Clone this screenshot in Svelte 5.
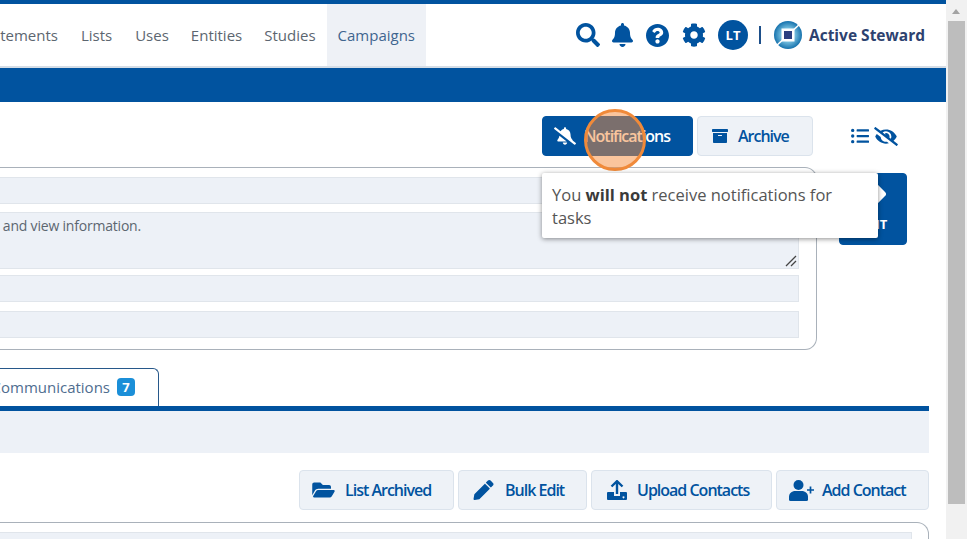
<script>
  const navItems = ['Statements', 'Lists', 'Uses', 'Entities', 'Studies'];
</script>

<div class="page">
  <div class="main">
    <header class="header">
      <nav class="nav">
        {#each navItems as item}
          <span class="nav-item">{item}</span>
        {/each}
        <span class="nav-item active">Campaigns</span>
      </nav>
      <div class="tools">
        <svg class="i-search" viewBox="0 0 512 512"><path d="M505 442.7L405.3 343c-4.5-4.5-10.6-7-17-7H372c27.6-35.3 44-79.7 44-128C416 93.1 322.9 0 208 0S0 93.1 0 208s93.1 208 208 208c48.3 0 92.7-16.4 128-44v16.3c0 6.4 2.5 12.5 7 17l99.7 99.7c9.4 9.4 24.6 9.4 33.9 0l28.3-28.3c9.4-9.4 9.4-24.6.1-34zM208 336c-70.7 0-128-57.2-128-128 0-70.7 57.2-128 128-128 70.7 0 128 57.2 128 128 0 70.7-57.2 128-128 128z"/></svg>
        <svg class="i-bell" viewBox="0 0 448 512"><path d="M224 512c35.32 0 63.97-28.65 63.97-64H160.03c0 35.35 28.65 64 63.97 64zm215.39-149.71c-19.32-20.76-55.47-51.99-55.47-154.29 0-77.7-54.48-139.9-127.94-155.16V32c0-17.67-14.32-32-31.98-32s-31.98 14.33-31.98 32v20.84C118.56 68.1 64.08 130.3 64.08 208c0 102.3-36.15 133.53-55.47 154.29-6 6.45-8.66 14.16-8.61 21.71.11 16.4 12.98 32 32.1 32h383.8c19.12 0 32-15.6 32.1-32 .05-7.55-2.61-15.27-8.61-21.71z"/></svg>
        <svg class="i-help" viewBox="8 8 496 496"><path d="M504 256c0 136.997-111.043 248-248 248S8 392.997 8 256C8 119.083 119.043 8 256 8s248 111.083 248 248zM262.655 90c-54.497 0-89.255 22.957-116.549 63.758-3.536 5.286-2.353 12.415 2.715 16.258l34.699 26.31c5.205 3.947 12.621 3.008 16.665-2.122 17.864-22.658 30.113-35.797 57.303-35.797 20.429 0 45.698 13.148 45.698 32.958 0 14.976-12.363 22.667-32.534 33.976C247.128 238.528 216 254.941 216 296v4c0 6.627 5.373 12 12 12h56c6.627 0 12-5.373 12-12v-1.333c0-28.462 83.186-29.647 83.186-106.667 0-58.002-60.165-102-116.531-102zM256 338c-25.365 0-46 20.635-46 46 0 25.364 20.635 46 46 46s46-20.636 46-46c0-25.365-20.635-46-46-46z"/></svg>
        <svg class="i-cog" viewBox="0 0 512 512"><path d="M487.4 315.7l-42.6-24.6c4.3-23.2 4.3-47 0-70.2l42.6-24.6c4.9-2.8 7.1-8.6 5.5-14-11.1-35.6-30-67.8-54.7-94.6-3.8-4.1-10-5.1-14.8-2.3L380.8 110c-17.9-15.4-38.5-27.3-60.8-35.1V25.8c0-5.6-3.9-10.5-9.4-11.7-36.7-8.2-74.3-7.8-109.2 0-5.5 1.2-9.4 6.1-9.4 11.7V75c-22.2 7.9-42.8 19.8-60.8 35.1L88.7 85.5c-4.9-2.8-11-1.9-14.8 2.3-24.7 26.7-43.6 58.9-54.7 94.6-1.7 5.4.6 11.2 5.5 14L67.3 221c-4.3 23.2-4.3 47 0 70.2l-42.6 24.6c-4.9 2.8-7.1 8.6-5.5 14 11.1 35.6 30 67.8 54.7 94.6 3.8 4.1 10 5.1 14.8 2.3l42.6-24.6c17.9 15.4 38.5 27.3 60.8 35.1v49.2c0 5.6 3.9 10.5 9.4 11.7 36.7 8.2 74.3 7.8 109.2 0 5.5-1.2 9.4-6.1 9.4-11.7v-49.2c22.2-7.9 42.8-19.8 60.8-35.1l42.6 24.6c4.9 2.8 11 1.9 14.8-2.3 24.7-26.7 43.6-58.9 54.7-94.6 1.5-5.5-.7-11.3-5.6-14.1zM256 336c-44.1 0-80-35.9-80-80s35.9-80 80-80 80 35.9 80 80-35.9 80-80 80z"/></svg>
        <span class="avatar">LT</span>
        <span class="divider"></span>
        <svg class="logo" viewBox="0 0 28 28">
          <defs>
            <radialGradient id="logoGrad" cx="50%" cy="50%" r="50%">
              <stop offset="0%" stop-color="#e8f6fb" />
              <stop offset="45%" stop-color="#7cc4e2" />
              <stop offset="100%" stop-color="#1672ad" />
            </radialGradient>
          </defs>
          <circle cx="14" cy="14" r="14" fill="url(#logoGrad)" />
          <path d="M1 26 L27 2" stroke="#fff" stroke-width="1.6" />
          <rect x="7.5" y="7.5" width="13" height="13" fill="#fff" />
          <rect x="10" y="10" width="8" height="8" fill="#2b3f80" />
        </svg>
        <span class="brand">Active Steward</span>
      </div>
    </header>
    <div class="banner"></div>

    <div class="actions">
      <button class="btn primary">
        <svg class="b-icon" viewBox="0 0 640 512"><path d="M633.82 458.1l-90.62-70.05c.19-1.38.8-2.66.8-4.05.05-7.55-2.61-15.27-8.61-21.71-19.32-20.76-55.47-51.99-55.47-154.29 0-77.7-54.48-139.9-127.94-155.16V32c0-17.67-14.32-32-31.98-32s-31.98 14.33-31.98 32v20.84c-40.33 8.38-74.66 31.07-97.59 62.57L45.47 3.37C38.49-2.05 28.43-.8 23.01 6.18L3.37 31.45C-2.05 38.42-.8 48.47 6.18 53.9l588.35 454.73c6.98 5.43 17.03 4.17 22.46-2.81l19.64-25.27c5.42-6.97 4.17-17.02-2.81-22.45zM157.23 251.54c-8.61 67.96-36.41 93.33-52.62 110.75-6 6.45-8.66 14.16-8.61 21.71.11 16.4 12.98 32 32.1 32h241.92L157.23 251.54zM320 512c35.32 0 64-28.65 64-64H256c0 35.35 28.68 64 64 64z"/></svg>
        Notifications
      </button>
      <button class="btn archive">
        <svg class="b-icon" viewBox="0 0 512 512"><path d="M32 448c0 17.7 14.3 32 32 32h384c17.7 0 32-14.3 32-32V160H32v288zm160-212c0-6.6 5.4-12 12-12h104c6.6 0 12 5.4 12 12v8c0 6.6-5.4 12-12 12H204c-6.6 0-12-5.4-12-12v-8zM480 32H32C14.3 32 0 46.3 0 64v48c0 8.8 7.2 16 16 16h480c8.8 0 16-7.2 16-16V64c0-17.7-14.3-32-32-32z"/></svg>
        Archive
      </button>
      <div class="view-icons">
        <svg class="i-list" viewBox="0 0 512 512"><path d="M48 48a48 48 0 1 0 48 48 48 48 0 0 0-48-48zm0 160a48 48 0 1 0 48 48 48 48 0 0 0-48-48zm0 160a48 48 0 1 0 48 48 48 48 0 0 0-48-48zm448 16H176a16 16 0 0 0-16 16v32a16 16 0 0 0 16 16h320a16 16 0 0 0 16-16v-32a16 16 0 0 0-16-16zm0-320H176a16 16 0 0 0-16 16v32a16 16 0 0 0 16 16h320a16 16 0 0 0 16-16V80a16 16 0 0 0-16-16zm0 160H176a16 16 0 0 0-16 16v32a16 16 0 0 0 16 16h320a16 16 0 0 0 16-16v-32a16 16 0 0 0-16-16z"/></svg>
        <svg class="i-eye" viewBox="0 0 640 512"><path d="M320 400c-75.85 0-137.25-58.71-142.9-133.11L72.2 185.82c-13.79 17.3-26.48 35.59-36.72 55.59a32.35 32.35 0 0 0 0 29.19C89.71 376.41 197.07 448 320 448c26.91 0 52.87-4 77.89-10.46L346 397.39a144.13 144.13 0 0 1-26 2.61zm313.82 58.1l-110.55-85.44a331.25 331.25 0 0 0 81.25-102.07 32.35 32.35 0 0 0 0-29.19C550.29 135.59 442.93 64 320 64a308.15 308.15 0 0 0-147.32 37.7L45.46 3.37A16 16 0 0 0 23 6.18L3.37 31.45A16 16 0 0 0 6.18 53.9l588.36 454.73a16 16 0 0 0 22.46-2.81l19.64-25.27a16 16 0 0 0-2.82-22.45zm-183.72-142l-39.3-30.38A94.75 94.75 0 0 0 416 256a94.76 94.76 0 0 0-121.31-92.21A47.65 47.65 0 0 1 304 192a46.64 46.64 0 0 1-1.54 10l-73.61-56.89A142.31 142.31 0 0 1 320 112a143.92 143.92 0 0 1 144 144c0 21.63-5.29 41.79-13.9 60.11z"/></svg>
      </div>
    </div>

    <div class="details">
      <section class="panel">
        <div class="field f1"></div>
        <div class="field f2">
          <span class="desc">Track campaigns, manage contacts and view information.</span>
          <svg class="grip" viewBox="0 0 12 12"><path d="M11 1 L1 11 M11 6 L6 11" stroke="#444" stroke-width="1.3" fill="none" /></svg>
        </div>
        <div class="field f3"></div>
        <div class="field f4"></div>
      </section>
      <button class="edit">
        <svg class="edit-icon" viewBox="0 0 30 30"><rect x="5" y="5" width="20" height="20" rx="3" transform="rotate(45 15 15)" fill="#fff" /></svg>
        <span>EDIT</span>
      </button>
    </div>

    <div class="tabs">
      <div class="tab">
        <span class="tab-label">Communications</span>
        <span class="badge">7</span>
      </div>
    </div>
    <div class="tab-band"></div>

    <div class="list-actions">
      <button class="btn">
        <svg class="b-icon wide" viewBox="0 0 576 512"><path d="M572.694 292.093L500.27 416.248A63.997 63.997 0 0 1 444.989 448H45.025c-18.523 0-30.064-20.093-20.731-36.093l72.424-124.155A64 64 0 0 1 152 256h399.964c18.523 0 30.064 20.093 20.73 36.093zM152 224h328v-48c0-26.51-21.49-48-48-48H272l-64-64H48C21.49 64 0 85.49 0 112v278.046l69.077-118.418C86.214 242.25 117.989 224 152 224z"/></svg>
        List Archived
      </button>
      <button class="btn">
        <svg class="b-icon wide" viewBox="0 0 512 512"><path d="M497.9 142.1l-46.1 46.1c-4.7 4.7-12.3 4.7-17 0l-111-111c-4.7-4.7-4.7-12.3 0-17l46.1-46.1c18.7-18.7 49.1-18.7 67.9 0l60.1 60.1c18.8 18.7 18.8 49.1 0 67.9zM284.2 99.8L21.6 362.4.4 483.9c-2.9 16.4 11.4 30.6 27.8 27.8l121.5-21.3 262.6-262.6c4.7-4.7 4.7-12.3 0-17l-111-111c-4.8-4.7-12.4-4.7-17.1 0z"/></svg>
        Bulk Edit
      </button>
      <button class="btn">
        <svg class="b-icon upload" viewBox="0 0 20 20">
          <path d="M4.5 6.5 L10 1.2 L15.500 6.500 M10 1.500 V14" fill="none" stroke="#01539f" stroke-width="2.4" />
          <path fill-rule="evenodd" d="M1 12 H7 V16 H13 V12 H19 Q20 12 20 13 V19 Q20 20 19 20 H1 Q0 20 0 19 V13 Q0 12 1 12 Z M16.500 16.200 a1 1 0 1 0 0.010 0 Z" />
        </svg>
        Upload Contacts
      </button>
      <button class="btn">
        <svg class="b-icon user" viewBox="0 0 26 21">
          <circle cx="9.5" cy="5" r="5" />
          <path d="M6.500 11 H12.500 C16.500 11 19 13.500 19 17 V19.500 Q19 21 17.500 21 H1.500 Q0 21 0 19.500 V17 C0 13.500 2.500 11 6.500 11 Z" />
          <path d="M21.500 6.500 V13.500 M18 10 H25" fill="none" stroke="#01539f" stroke-width="1.7" />
        </svg>
        Add Contact
      </button>
    </div>

    <section class="bottom-panel">
      <div class="bottom-field"></div>
    </section>
  </div>

  <div class="scrollbar">
    <span class="arrow"></span>
    <span class="thumb"></span>
  </div>

  <div class="highlight"></div>
  <div class="tooltip">You <b>will not</b> receive notifications for tasks</div>
</div>

<style>
  :global(body) {
    margin: 0;
    overflow: hidden;
    background: #fff;
  }

  .page {
    position: relative;
    display: flex;
    width: 967px;
    height: 539px;
    overflow: hidden;
    font-family: "Open Sans", sans-serif;
  }

  .main {
    width: 946px;
    flex: none;
    overflow: hidden;
    display: flex;
    flex-direction: column;
    align-items: flex-end;
  }

  .header {
    width: 100%;
    height: 64px;
    flex: none;
    box-sizing: content-box;
    border-top: 4px solid #01539f;
    display: flex;
    justify-content: space-between;
    box-shadow: inset 0 -2px 0 #d5dde6;
  }

  .nav {
    width: 426px;
    height: 62px;
    display: flex;
    justify-content: flex-end;
    overflow: hidden;
    flex: none;
  }

  .nav-item {
    display: flex;
    align-items: center;
    padding: 0 11px;
    font-size: 15px;
    color: #5c6670;
    white-space: nowrap;
    flex: none;
  }

  .nav-item:nth-child(1),
  .nav-item:nth-child(2) {
    padding-right: 12px;
  }

  .nav-item.active {
    background: #eef1f6;
    color: #3f658f;
  }

  .tools {
    display: flex;
    align-items: center;
    height: 62px;
    padding-right: 21px;
    color: #01539f;
    fill: #01539f;
  }

  .tools svg {
    flex: none;
    display: block;
  }

  .i-search { width: 24px; height: 24px; }
  .i-bell { width: 21px; height: 24px; margin-left: 12px; }
  .i-help { width: 23px; height: 23px; margin-left: 13px; }
  .i-cog { width: 24px; height: 24px; margin-left: 13px; }

  .avatar {
    width: 30px;
    height: 30px;
    margin-left: 12px;
    border-radius: 50%;
    background: #01539f;
    color: #fff;
    font-size: 13px;
    font-weight: 700;
    display: flex;
    align-items: center;
    justify-content: center;
  }

  .divider {
    width: 2px;
    height: 18px;
    margin-left: 11px;
    background: #1d4f8a;
  }

  .logo {
    width: 28px;
    height: 28px;
    margin-left: 13px;
  }

  .brand {
    margin-left: 7px;
    font-size: 15.5px;
    font-weight: 700;
    color: #2d4270;
    white-space: nowrap;
  }

  .banner {
    width: 100%;
    height: 34px;
    background: #01539f;
    flex: none;
  }

  .actions {
    margin-top: 14px;
    height: 40px;
    padding-right: 48px;
    display: flex;
    align-items: stretch;
    flex: none;
  }

  .btn {
    display: flex;
    align-items: center;
    justify-content: flex-start;
    box-sizing: border-box;
    height: 40px;
    padding: 0;
    border: 1px solid #dbe3ec;
    border-radius: 4px;
    background: #eef2f7;
    color: #01539f;
    font-family: inherit;
    font-size: 16px;
    font-weight: 600;
    letter-spacing: -1px;
    white-space: nowrap;
    fill: #01539f;
  }

  .btn.primary {
    width: 151px;
    padding-left: 11px;
    background: #01539f;
    border-color: #01539f;
    color: #fff;
    fill: #fff;
    gap: 8px;
  }

  .btn.archive {
    width: 116px;
    margin-left: 4px;
    padding-left: 14px;
    gap: 10px;
  }

  .b-icon {
    width: 22px;
    height: 18px;
    flex: none;
  }

  .btn.archive .b-icon { width: 16px; height: 16px; }

  .view-icons {
    margin-left: 38px;
    display: flex;
    align-items: center;
    gap: 5px;
    fill: #01539f;
  }

  .i-list { width: 18px; height: 18px; }
  .i-eye { width: 24px; height: 19px; }

  .details {
    margin-top: 11px;
    padding-right: 39px;
    display: flex;
    gap: 22px;
    align-items: flex-start;
    flex: none;
  }

  .panel {
    box-sizing: border-box;
    width: 840px;
    height: 183px;
    padding: 9px 17px 11px 0;
    border: 1px solid #a9b1ba;
    border-left: none;
    border-radius: 0 12px 12px 0;
    display: flex;
    flex-direction: column;
  }

  .field {
    box-sizing: border-box;
    position: relative;
    background: #edf1f7;
    border: 1px solid #e0e5eb;
    border-left: none;
    flex: none;
    overflow: hidden;
  }

  .f1 { height: 27px; }
  .f2 { height: 57px; margin-top: 8px; }
  .f3 { height: 27px; margin-top: 6px; }
  .f4 { height: 27px; margin-top: 9px; }

  .desc {
    position: absolute;
    right: 657px;
    top: 4px;
    font-size: 14px;
    letter-spacing: -0.2px;
    line-height: 18px;
    color: #5c6670;
    white-space: nowrap;
  }

  .grip {
    position: absolute;
    right: 1px;
    bottom: 1px;
    width: 12px;
    height: 12px;
  }

  .edit {
    box-sizing: border-box;
    width: 68px;
    height: 72px;
    margin-top: 6px;
    padding: 0 0 6px;
    border: 1px solid #01539f;
    border-radius: 4px;
    background: #01539f;
    color: #fff;
    font-family: inherit;
    font-size: 13px;
    font-weight: 700;
    display: flex;
    flex-direction: column;
    align-items: center;
    justify-content: center;
    gap: 6px;
    flex: none;
  }

  .edit-icon { width: 30px; height: 30px; flex: none; }

  .tabs {
    margin-top: 18px;
    width: 929px;
    margin-right: 17px;
    height: 38px;
    flex: none;
  }

  .tab {
    box-sizing: border-box;
    width: 159px;
    height: 39px;
    display: flex;
    align-items: center;
    justify-content: flex-end;
    gap: 7px;
    padding: 0 23px 2px 0;
    border: 1px solid #27588a;
    border-left: none;
    border-bottom: none;
    border-radius: 0 6px 0 0;
    overflow: hidden;
    background: #fff;
  }

  .tab-label {
    font-size: 15px;
    color: #4f6d8f;
    white-space: nowrap;
    flex: none;
  }

  .badge {
    width: 18px;
    height: 18px;
    border-radius: 4px;
    background: #1b8fd8;
    color: #fff;
    font-size: 13px;
    font-weight: 700;
    display: flex;
    align-items: center;
    justify-content: center;
    flex: none;
  }

  .tab-band {
    box-sizing: border-box;
    width: 929px;
    margin-right: 17px;
    height: 47px;
    background: #edf1f7;
    border-top: 5px solid #01539f;
    flex: none;
  }

  .list-actions {
    margin-top: 17px;
    margin-right: 17px;
    display: flex;
    gap: 4px;
    flex: none;
  }

  .list-actions .btn { gap: 10px; }
  .list-actions .btn:nth-child(1) { width: 155px; padding-left: 12px; }
  .list-actions .btn:nth-child(2) { width: 129px; padding-left: 13px; }
  .list-actions .btn:nth-child(3) { width: 181px; padding-left: 15px; }
  .list-actions .btn:nth-child(4) { width: 153px; padding-left: 12px; gap: 7px; }

  .b-icon.wide { width: 23px; height: 20px; }
  .b-icon.upload { width: 20px; height: 20px; }
  .b-icon.user { width: 26px; height: 21px; }

  .bottom-panel {
    box-sizing: border-box;
    margin-top: 12px;
    margin-right: 17px;
    width: 929px;
    height: 60px;
    padding: 9px 16px 0 0;
    border: 1px solid #a9b1ba;
    border-left: none;
    border-radius: 0 12px 0 0;
    flex: none;
  }

  .bottom-field {
    height: 40px;
    background: #edf1f7;
    border: 1px solid #e0e5eb;
    border-left: none;
  }

  .scrollbar {
    position: relative;
    width: 21px;
    flex: none;
    background: #f1f1f1;
  }

  .arrow {
    position: absolute;
    left: 6px;
    top: 9px;
    width: 0;
    height: 0;
    border-left: 4.5px solid transparent;
    border-right: 4.5px solid transparent;
    border-bottom: 5px solid #a3a3a3;
  }

  .thumb {
    position: absolute;
    left: 2px;
    right: 2px;
    top: 21px;
    height: 483px;
    background: #bdbdbd;
  }

  .highlight {
    position: absolute;
    left: 584px;
    top: 109px;
    width: 62px;
    height: 62px;
    box-sizing: border-box;
    border-radius: 50%;
    border: 3px solid #f08a3a;
    background: rgba(245, 140, 60, 0.5);
  }

  .tooltip {
    position: absolute;
    left: 542px;
    top: 173px;
    width: 336px;
    height: 65px;
    box-sizing: border-box;
    padding: 10px 40px 10px 10px;
    border-radius: 2px;
    background: #fff;
    box-shadow: 0 1px 5px rgba(0, 0, 0, 0.45);
    font-size: 16.5px;
    line-height: 23px;
    color: #555;
  }

  .tooltip b { color: #3a3a3a; }
</style>
